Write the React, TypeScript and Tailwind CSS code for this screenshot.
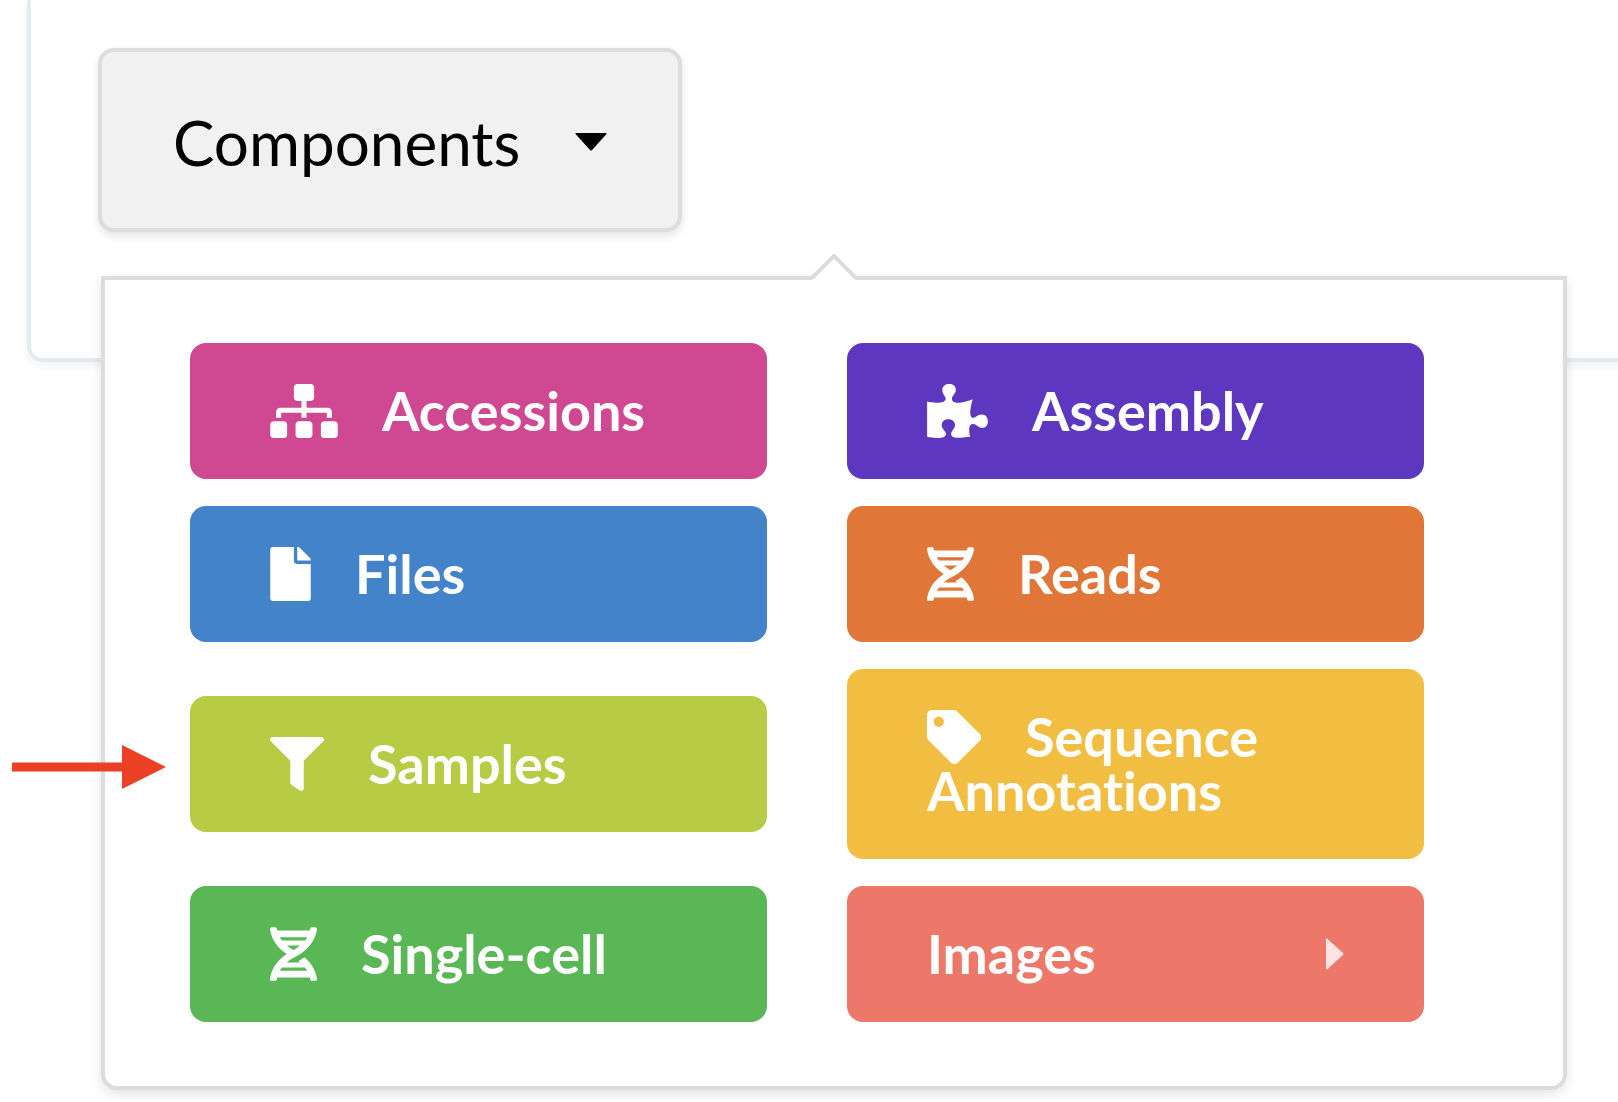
import type { ReactNode } from "react";
import { FaSitemap, FaFile, FaFilter, FaDna, FaPuzzlePiece, FaTag } from "react-icons/fa";

type TileProps = { color: string; icon?: ReactNode; label: string; submenu?: boolean };

function Tile({ color, icon, label, submenu }: TileProps) {
  return (
    <button
      type="button"
      className={`flex w-full items-center justify-between rounded-2xl px-20 py-[41px] text-left text-[54px] leading-[54px] font-bold text-white ${color}`}
    >
      <span>
        {icon && <span className="mr-11 inline-block align-top">{icon}</span>}
        {label}
      </span>
      {submenu && (
        <svg aria-hidden="true" viewBox="0 0 18 32" className="h-8 w-[18px] fill-white/80">
          <path d="M0 1Q0 0 1 0.500L17 15Q18 16 17 17L1 31.500Q0 32 0 31Z" />
        </svg>
      )}
    </button>
  );
}

export default function App() {
  return (
    <div className="min-h-screen overflow-hidden bg-white pl-[27px] font-[Lato,sans-serif] [font-variant-ligatures:none]">
      <section className="-mr-4 h-[362px] rounded-b-2xl border-4 border-t-0 border-[#e5eaef] pt-12 pl-[67px] shadow-[0_4px_8px_rgba(34,36,38,0.06)]">
        <div className="relative mr-[63px]">
          <button
            type="button"
            aria-expanded="true"
            className="flex h-[184px] w-[584px] items-center justify-between rounded-2xl border-4 border-[#dcdcdc] bg-[#f1f1f1] px-[71px] pt-1 text-[62px] leading-[62px] text-black shadow-[0_4px_8px_rgba(34,36,38,0.12)]"
          >
            Components
            <svg aria-hidden="true" viewBox="0 0 32 18" className="h-[18px] w-8 fill-black">
              <path d="M1 0H31Q32 0 31.500 1L17 17Q16 18 15 17L0.500 1Q0 0 1 0Z" />
            </svg>
          </button>
          <div className="absolute top-[228px] right-0 left-[3px] rounded-b-2xl border-4 border-[#dcdcdc] bg-white pt-[63px] pr-[139px] pb-16 pl-[85px] shadow-[0_4px_12px_rgba(34,36,38,0.12)]">
            <svg aria-hidden="true" viewBox="0 0 48 28" className="absolute -top-7 left-1/2 h-7 w-12 -translate-x-1/2">
              <path d="M2 28L24 4L46 28Z" fill="#fff" />
              <path d="M2 26L24 4L46 26" fill="none" stroke="#dcdcdc" strokeWidth="4" />
            </svg>
            <div className="grid grid-cols-2 items-center gap-x-20 gap-y-[27px]">
              <Tile color="bg-[#cf4891]" icon={<FaSitemap className="h-[54px] w-[68px]" />} label="Accessions" />
              <Tile color="bg-[#5e37c0]" icon={<FaPuzzlePiece className="h-[54px] w-[61px]" />} label="Assembly" />
              <Tile color="bg-[#4383c9]" icon={<FaFile className="h-[54px] w-[41px]" />} label="Files" />
              <Tile color="bg-[#e07637]" icon={<FaDna className="h-[54px] w-[47px]" />} label="Reads" />
              <Tile color="bg-[#b8cb44]" icon={<FaFilter className="size-[54px]" />} label="Samples" />
              <Tile color="bg-[#f2be42]" icon={<FaTag className="size-[54px]" />} label="Sequence Annotations" />
              <Tile color="bg-[#5ab756]" icon={<FaDna className="h-[54px] w-[47px]" />} label="Single-cell" />
              <Tile color="bg-[#ed7768]" label="Images" submenu />
            </div>
          </div>
        </div>
      </section>
      <svg aria-hidden="true" viewBox="0 0 154 44" className="absolute top-[745px] left-3 h-11 w-[154px] fill-[#eb4026]">
        <path d="M0 17.500H110V0L154 22L110 44V26.500H0Z" />
      </svg>
    </div>
  );
}
